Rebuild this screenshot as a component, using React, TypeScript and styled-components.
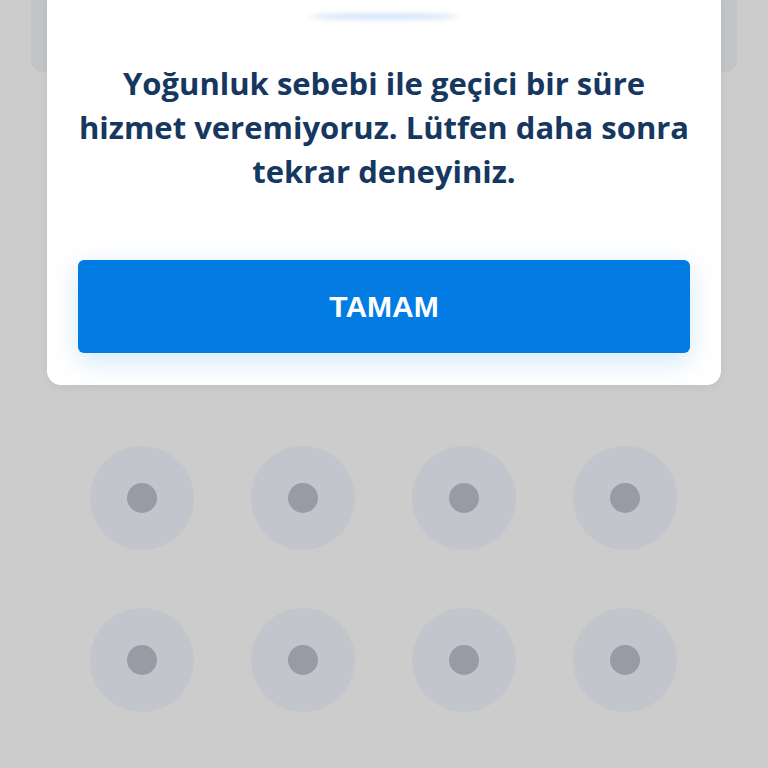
import React from "react"
import styled, { createGlobalStyle } from "styled-components"

const GlobalStyle = createGlobalStyle`
	html, body {
		margin: 0;
		padding: 0;
		background: #cccccc;
	}
	body {
		font-family: "Open Sans", "Noto Sans", sans-serif;
	}
`

const Page = styled.div`
	position: relative;
	width: 768px;
	height: 768px;
	overflow: hidden;
	background: #cccccc;
`

const BackCard = styled.div`
	margin: 0 31px;
	height: 72px;
	background: #c3c4c8;
	border-radius: 0 0 12px 12px;
`

const DotGrid = styled.div`
	display: grid;
	grid-template-columns: repeat(4, 104px);
	column-gap: 57px;
	row-gap: 58px;
	justify-content: center;
	padding-top: 374px;
	padding-right: 2px;
`

const DotRing = styled.div`
	width: 104px;
	height: 104px;
	border-radius: 50%;
	background: #c3c5cc;
	display: flex;
	align-items: center;
	justify-content: center;
`

const DotCore = styled.div`
	width: 30px;
	height: 30px;
	border-radius: 50%;
	background: #989ba3;
`

const Modal = styled.div`
	position: absolute;
	top: 0;
	left: 47px;
	right: 47px;
	padding: 0 31px 32px;
	background: #ffffff;
	border-radius: 0 0 14px 14px;
	box-shadow: 0 2px 8px rgba(0, 0, 0, 0.06);
	display: flex;
	flex-direction: column;
	align-items: stretch;
`

const Halo = styled.div`
	align-self: center;
	margin-top: 13px;
	width: 150px;
	height: 7px;
	border-radius: 50%;
	background: #d6e7f8;
	filter: blur(2.5px);
`

const Message = styled.p`
	margin: 41px 0 0;
	text-align: center;
	font-family: "Open Sans", "Noto Sans", sans-serif;
	font-weight: 700;
	font-size: 31px;
	line-height: 44px;
	color: #163760;
	white-space: nowrap;
`

const OkButton = styled.button`
	margin-top: 67px;
	height: 93px;
	border: none;
	border-radius: 6px;
	background: #027be3;
	color: #ffffff;
	font-family: "Liberation Sans", Arial, sans-serif;
	font-weight: 700;
	font-size: 30px;
	padding-top: 2px;
	box-shadow: 0 8px 28px rgba(2, 123, 227, 0.18);
	cursor: pointer;
`

export default function App() {
	const dots = Array.from({ length: 8 })
	return (
		<Page>
			<GlobalStyle />
			<BackCard />
			<DotGrid>
				{dots.map((_, i) => (
					<DotRing key={i}>
						<DotCore />
					</DotRing>
				))}
			</DotGrid>
			<Modal>
				<Halo />
				<Message>
					Yoğunluk sebebi ile geçici bir süre
					<br />
					hizmet veremiyoruz. Lütfen daha sonra
					<br />
					tekrar deneyiniz.
				</Message>
				<OkButton>TAMAM</OkButton>
			</Modal>
		</Page>
	)
}
